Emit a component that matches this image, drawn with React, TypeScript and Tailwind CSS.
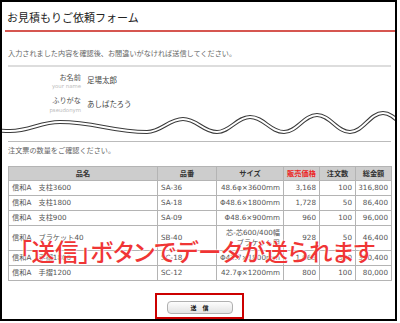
const rows = [
  { name: "信和A　支柱3600", code: "SA-36", size: ["48.6φ×3600mm"], price: "3,168", qty: "100", total: "316,800", h: "h-[15px]" },
  { name: "信和A　支柱1800", code: "SA-18", size: ["Φ48.6×1800mm"], price: "1,728", qty: "50", total: "86,400", h: "h-[15px]" },
  { name: "信和A　支柱900", code: "SA-09", size: ["Φ48.6×900mm"], price: "960", qty: "100", total: "96,000", h: "h-[15px]" },
  { name: "信和A　ブラケット40", code: "SB-40", size: ["芯-芯600/400幅", "ブラケット用"], price: "928", qty: "50", total: "46,400", h: "h-[25px]" },
  { name: "信和A　手摺1800", code: "SC-18", size: ["Φ42.7×1800mm"], price: "1,068", qty: "300", total: "320,400", h: "h-[15px]" },
  { name: "信和A　手摺1200", code: "SC-12", size: ["42.7φ×1200mm"], price: "800", qty: "100", total: "80,000", h: "h-[15px]" },
];

const cell = "border border-[#b4b4b4] p-0 leading-[10px] align-middle";

function Wave() {
  // double line "cut" across the form
  const d =
    "M-4,130 C3,131 7,131 10,131 C30,131 40,122 60,122 C95,122 112,132 147,132 C161,132 169,119 183,119 C197,119 203,132 217,132 C230,132 237,117 250,117 C264,117 270,132 284,132 C297,132 304,115 317,115 C330,115 337,132 350,132 C363,132 370,113 383,113 C396,113 403,132 416,132";
  return (
    <svg className="-mt-[4px] block" width="393" height="28" viewBox="2 110 393 28">
      <path d={d} fill="none" stroke="#3a3a3a" strokeWidth="4" />
      <path d={d} fill="none" stroke="#ffffff" strokeWidth="2" />
    </svg>
  );
}

export default function App() {
  return (
    <div
      className="relative h-[321px] w-[397px] overflow-hidden border-2 border-black bg-white"
      style={{ fontFamily: '"DejaVu Sans", "Noto Sans CJK JP", sans-serif' }}
    >
      <h1 className="pl-[5px] pt-[8px] text-[11px] leading-[14px] text-[#222] [font-family:'Noto_Sans_CJK_JP',sans-serif]">
        お見積もりご依頼フォーム
      </h1>
      <div className="ml-[3px] mt-[6px] h-[2px] bg-[#d65650]" />

      <p className="mt-[16px] pl-[6px] text-[7.15px] leading-[10px] text-[#666] [font-family:'Noto_Sans_CJK_JP',sans-serif]">
        入力されました内容を確認後、お間違いがなければ送信してください。
      </p>
      <div className="ml-[6px] mr-[4px] mt-[7px] h-[2px] bg-[#dddddd]" />

      {/* confirmed name fields */}
      <div className="mt-[6px] flex">
        <div className="w-[79px] text-right">
          <div className="text-[7.2px] leading-[9px] text-[#555]">お名前</div>
          <div className="text-[5.4px] leading-[8px] text-[#bbb]">your name</div>
        </div>
        <div className="ml-[6px] mt-[3px] text-[7.5px] leading-[9px] text-[#444]">足場太郎</div>
      </div>
      <div className="mt-[6px] flex">
        <div className="w-[79px] text-right">
          <div className="text-[7.2px] leading-[9px] text-[#555]">ふりがな</div>
          <div className="mt-[1px] text-[5.4px] leading-[8px] text-[#bbb]">pseudonym</div>
        </div>
        <div className="ml-[6px] mt-[4px] text-[7.5px] leading-[9px] text-[#444]">あしばたろう</div>
      </div>

      <Wave />

      <div className="ml-[6px] mr-[4px] mt-[3px] h-[1px] bg-[#bbbbbb]" />
      <p className="mt-[3px] pl-[6px] text-[7.15px] leading-[10px] text-[#666] [font-family:'Noto_Sans_CJK_JP',sans-serif]">
        注文票の数量をご確認ください。
      </p>

      <table className="ml-[6px] mt-[11px] w-[383px] table-fixed border-collapse text-[7.2px] text-[#555]">
        <colgroup>
          <col className="w-[149px]" />
          <col className="w-[59px]" />
          <col className="w-[67px]" />
          <col className="w-[36px]" />
          <col className="w-[36px]" />
          <col className="w-[36px]" />
        </colgroup>
        <thead>
          <tr className="h-[14px] bg-[#cdcdcd] font-bold text-[#333]">
            <th className={cell}>品名</th>
            <th className={cell}>品番</th>
            <th className={cell}>サイズ</th>
            <th className={`${cell} text-[#ee2222]`}>販売価格</th>
            <th className={cell}>注文数</th>
            <th className={cell}>総金額</th>
          </tr>
        </thead>
        <tbody>
          {rows.map((r) => (
            <tr key={r.code} className={r.h}>
              <td className={`${cell} pl-[3px] text-left`}>{r.name}</td>
              <td className={`${cell} pl-[3px] text-left`}>{r.code}</td>
              <td className={`${cell} pr-[3px] text-right`}>
                {r.size.map((s) => (
                  <div key={s}>{s}</div>
                ))}
              </td>
              <td className={`${cell} pr-[3px] text-right`}>{r.price}</td>
              <td className={`${cell} pr-[3px] text-right`}>{r.qty}</td>
              <td className={`${cell} pr-[3px] text-right`}>{r.total}</td>
            </tr>
          ))}
        </tbody>
      </table>

      {/* submit button, highlighted */}
      <div className="mt-[12px] flex justify-center pl-[2px]">
        <div className="flex h-[26px] w-[89px] justify-center border-2 border-[#cc0000] pt-[6px]">
          <button className="h-[13px] w-[66px] rounded-[4px] border border-[#b0b0b0] bg-linear-to-b from-[#fdfdfd] to-[#e2e2e2] text-[6px] font-bold leading-[11px] text-[#111] [font-family:'Noto_Sans_CJK_JP',sans-serif]">
            送　信
          </button>
        </div>
      </div>

      {/* caption over the table */}
      <div className="absolute left-0 right-0 top-[235px] pr-[2px] text-center text-[23.5px] font-medium leading-[28px] text-[#f03535] [font-family:'Noto_Sans_CJK_JP',sans-serif] [font-feature-settings:'palt'] [text-shadow:0_0_2px_#fff,0_0_2px_#fff]">
        「送信」ボタンでデータが送られます
      </div>
    </div>
  );
}
